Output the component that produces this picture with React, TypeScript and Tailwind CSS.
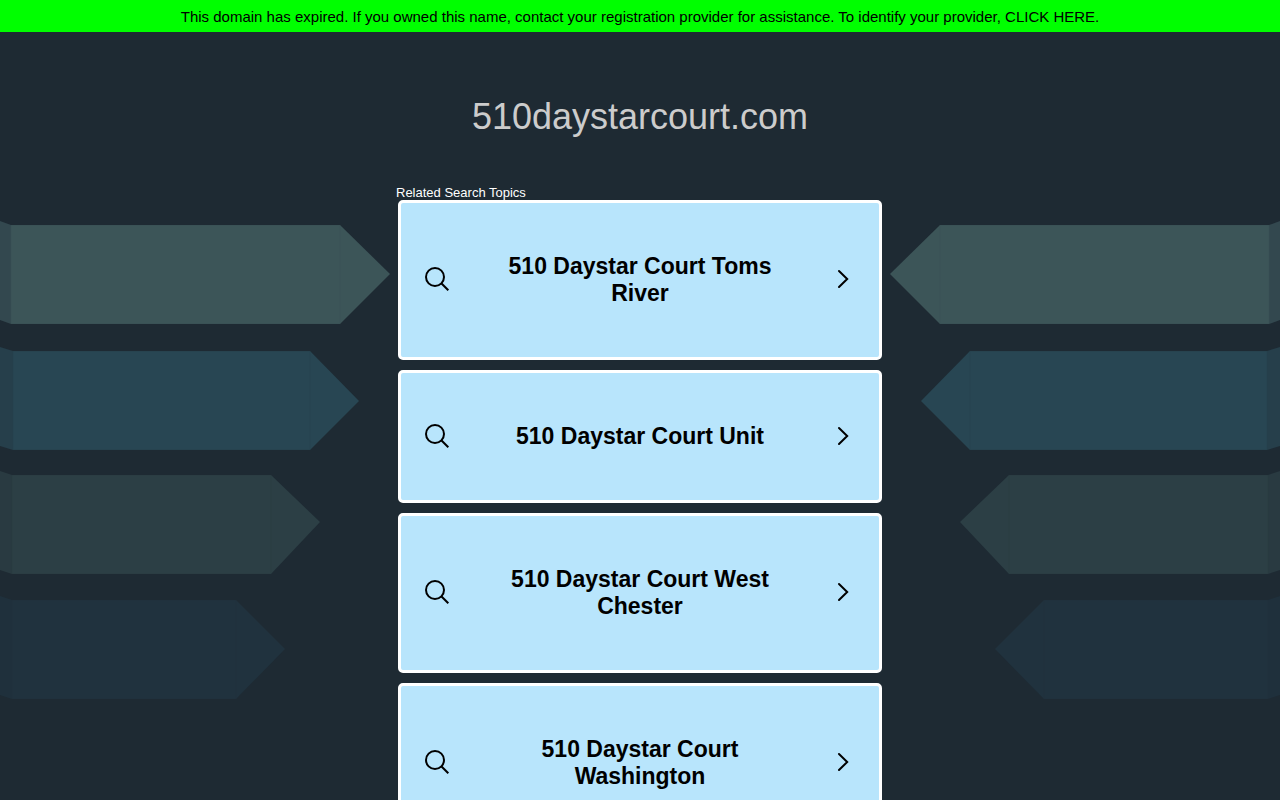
const topics = [
  '510 Daystar Court Toms River',
  '510 Daystar Court Unit',
  '510 Daystar Court West Chester',
  '510 Daystar Court Washington',
]

const arrows = [
  { top: 225, start: 11, shoulder: 340, tip: 390, mid: 274, fill: '#3c5558', side: '#33484f', edge: '#374f53' },
  { top: 351, start: 13, shoulder: 310, tip: 359, mid: 401, fill: '#284653', side: '#263f4b', edge: '#25404c' },
  { top: 475, start: 12, shoulder: 271, tip: 320, mid: 522, fill: '#2c3f45', side: '#293a41', edge: '#2a3b42' },
  { top: 600, start: 12, shoulder: 236, tip: 285, mid: 649, fill: '#20323e', side: '#1f303c', edge: '#1f303b' },
]

function Arrows({ className }: { className: string }) {
  return (
    <svg className={className} width="400" height="800" viewBox="0 0 400 800" aria-hidden="true">
      {arrows.map((a) => (
        <g key={a.top}>
          <path d={`M0 ${a.top - 4}L${a.start} ${a.top}V${a.top + 99}L0 ${a.top + 95}Z`} fill={a.side} />
          <path
            d={`M${a.start} ${a.top}H${a.shoulder}L${a.tip} ${a.mid}L${a.shoulder} ${a.top + 99}H${a.start}Z`}
            fill={a.fill}
          />
          <path
            d={`M${a.start} ${a.top + 0.5}H${a.shoulder}V${a.top + 98.5}H${a.start}Z`}
            fill="none"
            stroke={a.edge}
            strokeOpacity="0.5"
          />
        </g>
      ))}
    </svg>
  )
}

function TopicCard({ title }: { title: string }) {
  return (
    <a
      href="#"
      className="flex items-center justify-between rounded-[5px] border-3 border-white bg-[#b8e5fc] px-6 py-[50px] text-black"
    >
      <svg className="mb-[2px] shrink-0" width="24" height="24" viewBox="0 0 24 24" fill="none" stroke="currentColor" strokeWidth="2" aria-hidden="true">
        <circle cx="10" cy="10" r="9" />
        <path d="M16.3 16.3L23.3 23.3" />
      </svg>
      <span className="w-[278px] text-center text-[23px] leading-[27px] font-bold">{title}</span>
      <svg className="mb-[2px] shrink-0" width="24" height="24" viewBox="0 0 24 24" fill="none" stroke="currentColor" strokeWidth="2" strokeLinecap="round" aria-hidden="true">
        <path d="M8 4L16.2 12L8 20" />
      </svg>
    </a>
  )
}

export default function App() {
  return (
    <div className="relative min-h-screen overflow-hidden bg-[#1e2a33] font-['Liberation_Sans',Arial,sans-serif]">
      {/* Background */}
      <Arrows className="absolute top-0 left-0" />
      <Arrows className="absolute top-0 right-0 -scale-x-100" />

      {/* Expiry notice */}
      <div className="relative bg-[#00ff00] px-4 pt-[5px] pb-[3px] text-center text-[15px] leading-6 text-black">
        <a href="#">
          This domain has expired. If you owned this name, contact your registration provider for assistance. To
          identify your provider, CLICK HERE.
        </a>
      </div>

      <header className="relative px-4 pt-[65px] pb-[49px] text-center">
        <h1 className="text-4xl text-[#cccccc]">510daystarcourt.com</h1>
      </header>

      {/* Related topics */}
      <main className="relative mx-auto max-w-[488px]">
        <h2 className="text-[13px] leading-[14px] text-white">Related Search Topics</h2>
        <nav className="flex flex-col gap-[10px] px-[2px]">
          {topics.map((topic) => (
            <TopicCard key={topic} title={topic} />
          ))}
        </nav>
      </main>
    </div>
  )
}
